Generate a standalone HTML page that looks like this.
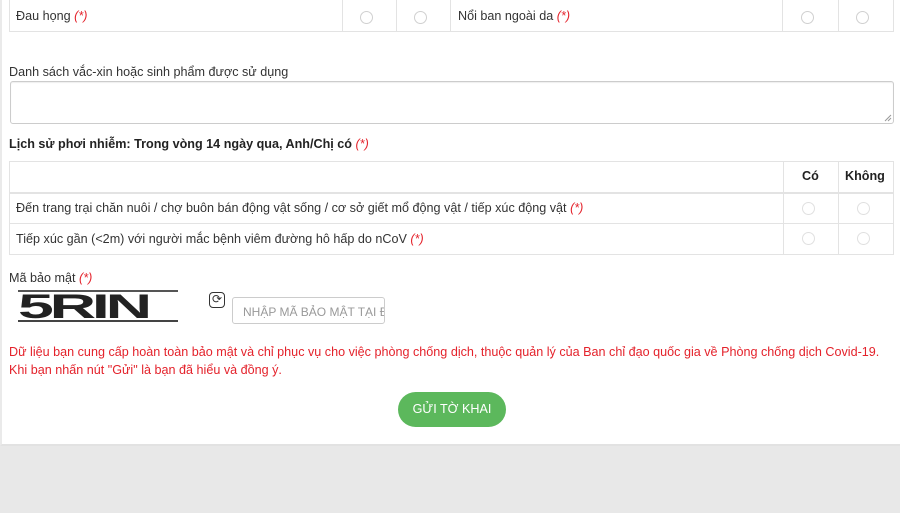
<!DOCTYPE html>
<html><head><meta charset="utf-8"><style>
*{box-sizing:border-box}
body{margin:0;width:900px;height:513px;background:#e8e8e8;font-family:"Liberation Sans",Arial,sans-serif;font-size:12.6px;color:#333;position:relative;overflow:hidden}
.panel{position:absolute;left:0;top:0;width:900px;height:446px;background:#fff;border-left:2px solid #eaeaea;border-bottom:2px solid #e2e2e2}
.abs{position:absolute}
.cell{position:absolute;border:1px solid #e3e3e3}
.req{color:#e4222b;font-style:italic}
.radio{position:absolute;width:13px;height:13px;border:1px solid #d0d0d0;border-radius:50%;background:#fff}
.red{color:#e4222b}
</style></head><body>
<div class="panel"></div>
<div class="cell" style="left:9px;top:-1px;width:885px;height:33px"></div>
<div class="abs" style="left:342px;top:0;width:1px;height:32px;background:#e3e3e3"></div>
<div class="abs" style="left:396px;top:0;width:1px;height:32px;background:#e3e3e3"></div>
<div class="abs" style="left:450px;top:0;width:1px;height:32px;background:#e3e3e3"></div>
<div class="abs" style="left:782px;top:0;width:1px;height:32px;background:#e3e3e3"></div>
<div class="abs" style="left:838px;top:0;width:1px;height:32px;background:#e3e3e3"></div>
<div class="abs" style="left:16px;top:9px">Đau họng <span class="req">(*)</span></div>
<div class="abs" style="left:458px;top:9px">Nổi ban ngoài da <span class="req">(*)</span></div>
<div class="radio" style="left:360px;top:11px"></div>
<div class="radio" style="left:414px;top:11px"></div>
<div class="radio" style="left:801px;top:11px"></div>
<div class="radio" style="left:856px;top:11px"></div>

<div class="abs" style="left:9px;top:65px">Danh sách vắc-xin hoặc sinh phẩm được sử dụng</div>
<div class="abs" style="left:10px;top:81px;width:884px;height:43px;border:1px solid #ccc;border-radius:3px;box-shadow:inset 0 1px 1px rgba(0,0,0,.07)"></div>
<svg class="abs" style="left:884px;top:114px" width="8" height="8"><path d="M1 7L7 1M4 7L7 4" stroke="#999" stroke-width="1"/></svg>

<div class="abs" style="left:9px;top:137px;font-weight:bold;color:#222">Lịch sử phơi nhiễm: Trong vòng 14 ngày qua, Anh/Chị có <span class="req" style="font-weight:normal">(*)</span></div>

<div class="cell" style="left:9px;top:161px;width:885px;height:94px"></div>
<div class="abs" style="left:9px;top:192px;width:885px;height:2px;background:#e3e3e3"></div>
<div class="abs" style="left:9px;top:223px;width:885px;height:1px;background:#e3e3e3"></div>
<div class="abs" style="left:783px;top:161px;width:1px;height:93px;background:#e3e3e3"></div>
<div class="abs" style="left:838px;top:161px;width:1px;height:93px;background:#e3e3e3"></div>
<div class="abs" style="left:802px;top:169px;font-weight:bold;color:#222">Có</div>
<div class="abs" style="left:845px;top:169px;font-weight:bold;color:#222">Không</div>
<div class="abs" style="left:16px;top:201px">Đến trang trại chăn nuôi / chợ buôn bán động vật sống / cơ sở giết mổ động vật / tiếp xúc động vật <span class="req">(*)</span></div>
<div class="abs" style="left:16px;top:232px">Tiếp xúc gần (&lt;2m) với người mắc bệnh viêm đường hô hấp do nCoV <span class="req">(*)</span></div>
<div class="radio" style="left:802px;top:202px;border-color:#e0e0e0"></div>
<div class="radio" style="left:857px;top:202px;border-color:#e0e0e0"></div>
<div class="radio" style="left:802px;top:232px;border-color:#e0e0e0"></div>
<div class="radio" style="left:857px;top:232px;border-color:#e0e0e0"></div>

<div class="abs" style="left:9px;top:271px">Mã bảo mật <span class="req">(*)</span></div>
<div class="abs" style="left:18px;top:286px;width:162px;height:40px;overflow:hidden">
<div style="font:bold 46px/40px 'Liberation Sans',sans-serif;color:#222;letter-spacing:-3px;transform:scaleX(1.4) scaleY(0.75);transform-origin:left center;">5RIN</div>
<div class="abs" style="left:0;top:4px;width:160px;height:2px;background:#555"></div>
<div class="abs" style="left:0;top:34px;width:160px;height:2px;background:#444"></div>
</div>
<div class="abs" style="left:209px;top:292px;width:16px;height:16px;border:1.5px solid #333;border-radius:4px;text-align:center;font-size:12px;line-height:13px;color:#333">⟳</div>
<div class="abs" style="left:232px;top:297px;width:153px;height:27px;border:1px solid #ccc;border-radius:3px;color:#999;font-size:12px;padding:7px 0 0 10px;white-space:nowrap;overflow:hidden">NHẬP MÃ BẢO MẬT TẠI Đ</div>

<div class="abs red" style="left:9px;top:343px;line-height:18px;white-space:nowrap">Dữ liệu bạn cung cấp hoàn toàn bảo mật và chỉ phục vụ cho việc phòng chống dịch, thuộc quản lý của Ban chỉ đạo quốc gia về Phòng chống dịch Covid-19.<br>Khi bạn nhấn nút "Gửi" là bạn đã hiểu và đồng ý.</div>

<div class="abs" style="left:398px;top:392px;width:108px;height:35px;background:#5cb85c;border-radius:18px;color:#fff;text-align:center;line-height:35px;font-size:12.6px">GỬI TỜ KHAI</div>
</body></html>
